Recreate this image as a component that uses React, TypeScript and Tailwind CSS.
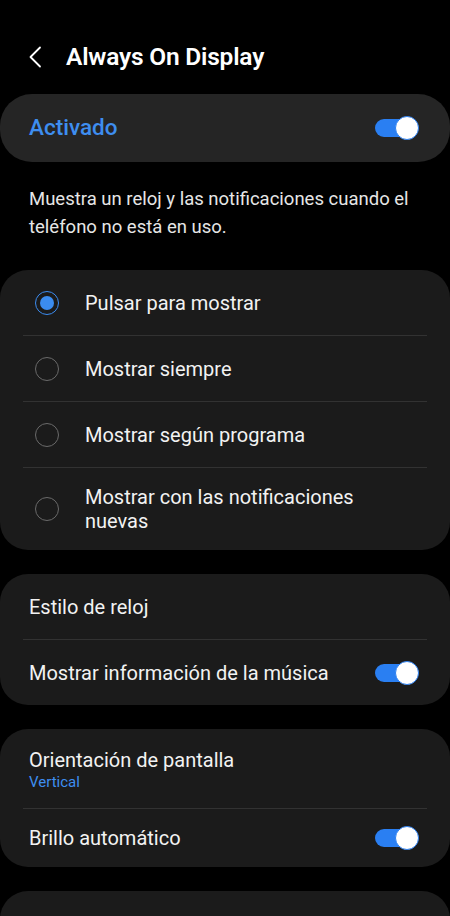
import React from "react";

const font = { fontFamily: "Roboto, 'Noto Sans', sans-serif" };

const Toggle: React.FC = () => (
  <div className="relative h-[24px] w-[44px] shrink-0">
    <div className="absolute left-0 right-[2px] top-[3px] h-[18px] rounded-full bg-[#2a7ff2]" />
    <div className="absolute right-0 top-0 h-[24px] w-[24px] rounded-full border-[1.5px] border-[#2a7ff2] bg-white" />
  </div>
);

const Radio: React.FC<{ checked?: boolean }> = ({ checked }) => (
  <div
    className={
      checked
        ? "flex h-[24px] w-[24px] shrink-0 items-center justify-center rounded-full border-[1.5px] border-[#3b8cf0]"
        : "h-[24px] w-[24px] shrink-0 rounded-full border-[1.5px] border-[#6a6a6a]"
    }
  >
    {checked && <div className="h-[14px] w-[14px] rounded-full bg-[#3b8cf0]" />}
  </div>
);

const Divider: React.FC = () => <div className="mx-[23px] h-px bg-[#323232]" />;

const radioOptions = [
  { label: "Pulsar para mostrar", checked: true, h: "h-[65px]" },
  { label: "Mostrar siempre", h: "h-[65px]" },
  { label: "Mostrar según programa", h: "h-[65px]" },
  { label: "Mostrar con las notificaciones nuevas", h: "h-[82px]" },
];

export default function App() {
  return (
    <div className="min-h-[916px] w-[450px] overflow-hidden bg-black text-white" style={font}>
      {/* Header */}
      <div className="flex h-[94px] items-start pt-[41px]">
        <div className="ml-[28px] flex h-[32px] w-[20px] items-center">
          <svg width="14" height="22" viewBox="0 0 14 22" fill="none">
            <path d="M12 1.5 L2.5 11 L12 20.5" stroke="#fff" strokeWidth="1.8" strokeLinecap="round" strokeLinejoin="round" />
          </svg>
        </div>
        <h1 className="ml-[18px] text-[24.5px] leading-[32px] font-semibold tracking-[-0.2px] text-white">
          Always On Display
        </h1>
      </div>

      {/* Master switch */}
      <div className="flex h-[68px] items-center justify-between rounded-[32px] bg-[#252525] pl-[29px] pr-[31px]">
        <span className="text-[22.5px] font-medium text-[#3e8ef0]">Activado</span>
        <Toggle />
      </div>

      <p className="px-[29px] pt-[23px] pb-[29px] text-[18.5px] leading-[28px] text-[#e6e6e6]">
        Muestra un reloj y las notificaciones cuando el teléfono no está en uso.
      </p>

      {/* Radio options */}
      <div className="rounded-[28px] bg-[#1b1b1b]">
        {radioOptions.map((o, i) => (
          <React.Fragment key={o.label}>
            {i > 0 && <Divider />}
            <div className={`flex items-center pl-[35px] pr-[29px] ${o.h}`}>
              <Radio checked={o.checked} />
              <span className="ml-[26px] max-w-[290px] text-[20px] leading-[24px] text-[#f2f2f2]">{o.label}</span>
            </div>
          </React.Fragment>
        ))}
      </div>

      {/* Clock / music */}
      <div className="mt-[24px] rounded-[28px] bg-[#1b1b1b]">
        <div className="flex h-[65px] items-center px-[29px]">
          <span className="text-[20px] text-[#f2f2f2]">Estilo de reloj</span>
        </div>
        <Divider />
        <div className="flex h-[65px] items-center justify-between pl-[29px] pr-[31px]">
          <span className="text-[20px] text-[#f2f2f2]">Mostrar información de la música</span>
          <Toggle />
        </div>
      </div>

      {/* Orientation / brightness */}
      <div className="mt-[24px] rounded-[28px] bg-[#1b1b1b]">
        <div className="flex h-[79px] flex-col justify-center px-[29px] pt-[2px]">
          <span className="text-[20px] leading-[24px] text-[#f2f2f2]">Orientación de pantalla</span>
          <span className="text-[15px] leading-[20px] text-[#3e8ef0]">Vertical</span>
        </div>
        <Divider />
        <div className="flex h-[58px] items-center justify-between pl-[29px] pr-[31px]">
          <span className="text-[20px] text-[#f2f2f2]">Brillo automático</span>
          <Toggle />
        </div>
      </div>

      <div className="mt-[24px] h-[60px] rounded-t-[28px] bg-[#1b1b1b]" />
    </div>
  );
}
